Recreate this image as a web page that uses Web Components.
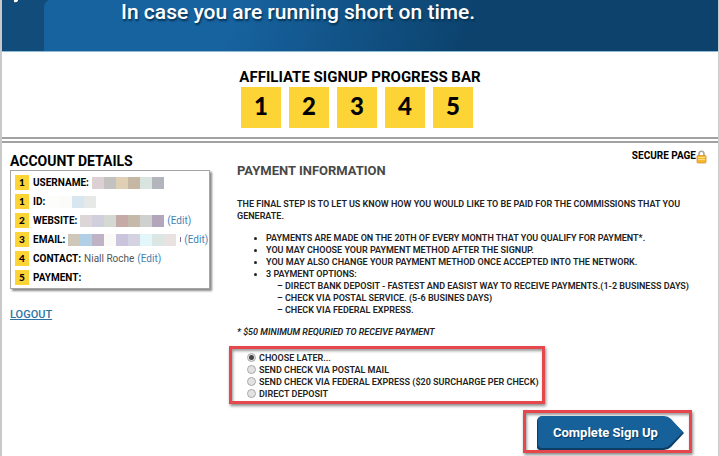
<!DOCTYPE html>
<html lang="en">
<head>
<meta charset="utf-8">
<title>Affiliate Signup</title>
<style>
  html { background: #fff; }
  body { margin: 0; font-family: Roboto, "Open Sans", sans-serif; color: #111; }
</style>
</head>
<body>
<signup-page></signup-page>

<template id="t-page">
  <style>
    :host { display: block; min-height: 100vh; box-sizing: border-box; overflow: hidden;
      border-left: 2px solid #c9c9c9; border-right: 1px solid #ccc; }
    .columns { display: grid; grid-template-columns: 200px minmax(0, 1fr); column-gap: 27px; padding: 0 10px 0 8px; }
    aside { padding-top: 10px; }
    main { padding-top: 5px; }
    h2 { margin: 0; font-size: 14px; line-height: 16px; color: #000; padding-bottom: 1px; }
    .logout { display: inline-block; margin-top: 18px; font-size: 11px; line-height: 16px; font-weight: 500; color: #2c73a5; }
  </style>
  <page-banner>In case you are running short on time.</page-banner>
  <progress-bar steps="5">AFFILIATE SIGNUP PROGRESS BAR</progress-bar>
  <div class="columns">
    <aside>
      <h2>ACCOUNT DETAILS</h2>
      <account-card></account-card>
      <a class="logout" href="#logout">LOGOUT</a>
    </aside>
    <main><payment-form></payment-form></main>
  </div>
</template>

<template id="t-banner">
  <style>
    :host { display: flex; height: 52px; box-sizing: border-box; border-bottom: 1px solid #8dbbd6;
      background: linear-gradient(110deg, #1763a0 0%, #1763a0 32%, #0c426c 66%, #0c426c 100%); }
    svg { flex: none; width: 48px; height: 51px; }
    p { margin: 0; padding-left: 71px; font-size: 21px; line-height: 24px; font-weight: 500; color: #fff;
      text-shadow: 1px 2px 2px #06304f; white-space: nowrap; }
  </style>
  <svg viewBox="0 0 48 51" aria-hidden="true">
    <path d="M0 0H47Q42 2 42 8V51H0Z" fill="#114c7b"/>
    <path d="M12 0H16V1Q14 3 12 2Z" fill="#fff"/>
  </svg>
  <p><slot></slot></p>
</template>

<template id="t-progress">
  <style>
    :host { display: flex; flex-direction: column; align-items: center; padding: 16px 0 9px;
      border-bottom: 6px double #a2a2a2; }
    h1 { margin: 0; font-size: 15px; line-height: 19px; color: #000; }
    ol { list-style: none; margin: 0; padding: 0; display: flex; gap: 8px; width: 238px; }
    li { flex: none; width: 40px; height: 41px; background: #fcd436; color: #000; font-family: Lato, sans-serif; font-size: 24px; line-height: 38px;
      font-weight: 900; text-align: center; }
  </style>
  <h1><slot></slot></h1>
  <ol></ol>
</template>

<template id="t-card">
  <style>
    :host { display: flex; flex-direction: column; gap: 4px; padding: 4px 0 3px 4px; border: 1px solid #a5a5a5;
      box-shadow: 2px 2px 2px #8a8a8a; background: #fff; }
  </style>
  <account-row step="1" label="USERNAME:" blocks="#dcd0d4 #c2c2c0 #dfcfb5 #c6b6a4 #d9e4e1 #b3b5bd"></account-row>
  <account-row step="1" label="ID:" blocks="#fdfdfb #fbfbf9 #d8e7ef #e6e9e8"></account-row>
  <account-row step="2" label="WEBSITE:" blocks="#dcd6d9 #d1cede #d5d9d4 #c6aaa8 #c5b9aa #cfd1ce #b3a6bb" edit></account-row>
  <account-row step="3" label="EMAIL:" blocks="#d0c7bb #b2d0e5 #c0b3c5 #fbfaf6 #cac4dd #d5d3e3 #e3f7fa #dce7e5 #e8e2e0" edit mark></account-row>
  <account-row step="4" label="CONTACT:" edit>Niall Roche</account-row>
  <account-row step="5" label="PAYMENT:"></account-row>
</template>

<template id="t-row">
  <style>
    :host { display: flex; align-items: center; height: 15px; font-size: 10px; line-height: 15px; white-space: nowrap; color: #555; }
    .step { flex: none; width: 14px; margin-right: 4px; background: #fcd436; color: #000; font-family: Lato, sans-serif; font-weight: 900; text-align: center; }
    b { color: #000; margin-right: 3px; }
    .mask { display: flex; }
    .mask i { width: 12px; height: 12px; }
    .mark { width: 1px; height: 5px; background: #876aa0; margin-left: 4px; }
    a { color: #4583b4; text-decoration: none; margin-left: 3px; }
  </style>
  <span class="step"></span><b></b><span class="mask" aria-hidden="true"></span><slot></slot>
</template>

<template id="t-form">
  <style>
    :host { display: block; font-size: 9px; line-height: 12px; font-weight: 600; color: #222; }
    .secure { display: flex; justify-content: flex-end; align-items: flex-start; padding-right: 1px; font-size: 10px; line-height: 16px; font-weight: 700; color: #000; }
    .secure svg { width: 11px; height: 14px; margin-top: 2px; }
    h2 { margin: 0; font-size: 13px; line-height: 14px; color: #484848; }
    p { margin: 20px 0 10px; }
    ul { margin: 0; padding-left: 29px; }
    ul ul { list-style: none; padding-left: 11px; }
    em { display: block; margin: 10px 0 8px; }
    form { display: flex; flex-direction: column; }
    .actions { display: flex; justify-content: flex-end; margin-right: 16px; padding-top: 6px; }
  </style>
  <div class="secure">SECURE PAGE<svg viewBox="0 0 11 14" aria-hidden="true">
    <path d="M3 6V4Q3 1.200 5.500 1.200T8 4V6" fill="none" stroke="#aaa79d" stroke-width="1.600"/>
    <rect x="1" y="5.500" width="9" height="7.500" rx="1" fill="#f5b932" stroke="#d28b18" stroke-width=".7"/>
    <path d="M2 7.500H9M2 9.500H9" stroke="#ffdc7a"/></svg></div>
  <h2>PAYMENT INFORMATION</h2>
  <p>THE FINAL STEP IS TO LET US KNOW HOW YOU WOULD LIKE TO BE PAID FOR THE COMMISSIONS THAT YOU GENERATE.</p>
  <ul>
    <li>PAYMENTS ARE MADE ON THE 20TH OF EVERY MONTH THAT YOU QUALIFY FOR PAYMENT*.</li>
    <li>YOU MAY CHOOSE YOUR PAYMENT METHOD AFTER THE SIGNUP.</li>
    <li>YOU MAY ALSO CHANGE YOUR PAYMENT METHOD ONCE ACCEPTED INTO THE NETWORK.</li>
    <li>3 PAYMENT OPTIONS:
      <ul>
        <li>– DIRECT BANK DEPOSIT - FASTEST AND EASIST WAY TO RECEIVE PAYMENTS.(1-2 BUSINESS DAYS)</li>
        <li>– CHECK VIA POSTAL SERVICE. (5-6 BUSINES DAYS)</li>
        <li>– CHECK VIA FEDERAL EXPRESS.</li>
      </ul>
    </li>
  </ul>
  <em>* $50 MINIMUM REQURIED TO RECEIVE PAYMENT</em>
  <form>
    <payment-options></payment-options>
    <div class="actions"><arrow-button>Complete Sign Up</arrow-button></div>
  </form>
</template>

<template id="t-options">
  <style>
    :host { display: block; align-self: flex-start; margin-left: -8px; box-sizing: border-box; border: 3px solid #e5474d;
      box-shadow: 1px 2px 3px #888, inset 1px 2px 3px #999; padding: 3px 3px 1px 15px; }
    fieldset { border: 0; margin: 0; padding: 0; min-width: 0; display: grid; }
    label { display: flex; align-items: center; height: 12px; gap: 3px; font-weight: 600; white-space: nowrap; }
    input { appearance: none; flex: none; margin: 0 0 2px; box-sizing: border-box; width: 9px; height: 9px; border: 1px solid #aaa; border-radius: 50%; background: #e2e2e2; }
    input:checked { background: radial-gradient(circle, #444 0 2px, #e2e2e2 3px); }
  </style>
  <fieldset aria-label="Payment method">
    <label><input type="radio" name="pay" checked>CHOOSE LATER...</label>
    <label><input type="radio" name="pay">SEND CHECK VIA POSTAL MAIL</label>
    <label><input type="radio" name="pay">SEND CHECK VIA FEDERAL EXPRESS ($20 SURCHARGE PER CHECK)</label>
    <label><input type="radio" name="pay">DIRECT DEPOSIT</label>
  </fieldset>
</template>

<template id="t-button">
  <style>
    :host { display: block; border: 3px solid #e5474d; box-shadow: 1px 2px 3px #888, inset 1px 2px 3px #999; padding: 3px 5px 0 11px; }
    button { display: grid; border: 0; padding: 0; background: none; color: #fff; font: 700 13px/34px Roboto, sans-serif; cursor: pointer; }
    svg, span { grid-area: 1 / 1; }
    svg { width: 147px; height: 34px; }
    span { padding-left: 16px; text-align: left; line-height: 33px; text-shadow: 1px 1px 1px #083b64; }
  </style>
  <button type="button">
    <svg viewBox="0 0 147 34" aria-hidden="true">
      <path d="M5 1H127Q131 1 134 4L147 17L134 31Q131 34 127 34H3Q0 34 0 31V5Q0 1 5 1Z" fill="#0b3d66"/>
      <path d="M5 0H127Q131 0 134 3L146 16L133 29Q130 32 126 32H5Q1 32 1 28V4Q1 0 5 0Z" fill="#17619b"/>
    </svg>
    <span><slot></slot></span>
  </button>
</template>

<script>
  class TemplateElement extends HTMLElement {
    constructor() {
      super();
      this.attachShadow({ mode: 'open' }).append(
        document.getElementById(this.constructor.template).content.cloneNode(true));
    }
  }
  const define = (name, template) =>
    customElements.define(name, class extends TemplateElement { static template = template; });

  class ProgressBar extends TemplateElement {
    static template = 't-progress';
    connectedCallback() {
      const list = this.shadowRoot.querySelector('ol');
      list.replaceChildren();
      for (let n = 1; n <= Number(this.getAttribute('steps')); n++) {
        const item = document.createElement('li');
        item.textContent = n;
        list.append(item);
      }
    }
  }

  class AccountRow extends TemplateElement {
    static template = 't-row';
    connectedCallback() {
      const root = this.shadowRoot;
      root.querySelector('.step').textContent = this.getAttribute('step');
      root.querySelector('b').textContent = this.getAttribute('label');
      const mask = root.querySelector('.mask');
      for (const color of (this.getAttribute('blocks') || '').split(' ').filter(Boolean)) {
        const block = document.createElement('i');
        block.style.background = color;
        mask.append(block);
      }
      if (this.hasAttribute('mark')) {
        const mark = document.createElement('span');
        mark.className = 'mark';
        root.append(mark);
      }
      if (this.hasAttribute('edit')) {
        const link = document.createElement('a');
        link.href = '#edit';
        link.textContent = '(Edit)';
        root.append(link);
      }
    }
  }

  customElements.define('progress-bar', ProgressBar);
  customElements.define('account-row', AccountRow);
  define('page-banner', 't-banner');
  define('account-card', 't-card');
  define('arrow-button', 't-button');
  define('payment-options', 't-options');
  define('payment-form', 't-form');
  define('signup-page', 't-page');
</script>
</body>
</html>
